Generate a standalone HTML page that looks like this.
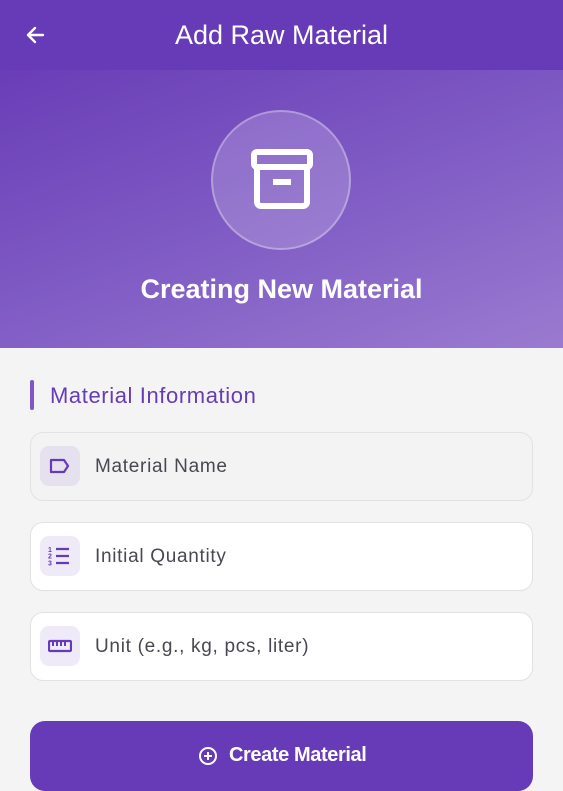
<!DOCTYPE html>
<html><head><meta charset="utf-8"><style>
*{box-sizing:border-box;margin:0;padding:0}
body{width:563px;height:770px;overflow:hidden;background:#f4f4f4;font-family:"Liberation Sans",sans-serif;position:relative}
.hdr{position:absolute;left:0;top:0;width:563px;height:70px;background:#673ab7}
.hdr .t{position:absolute;left:0;width:563px;top:20px;text-align:center;color:#fff;font-size:27px;letter-spacing:0px}
.hero{position:absolute;left:0;top:70px;width:563px;height:278px;background:linear-gradient(160deg,#6a3db7 0%,#7f5bc4 50%,#9a7bd0 100%)}
.circ{position:absolute;left:211px;top:40px;width:140px;height:140px;border-radius:50%;background:rgba(255,255,255,0.18);border:2px solid rgba(255,255,255,0.3)}
.ht{position:absolute;left:0;width:563px;top:204px;text-align:center;color:#fff;font-size:27px;font-weight:bold;letter-spacing:0px}
.sec{position:absolute;left:30px;top:380px;width:4px;height:30px;border-radius:2px;background:#7e57c2}
.st{position:absolute;left:50px;top:383px;color:#673ab7;font-size:22px;letter-spacing:0.6px}
.f{position:absolute;left:30px;width:503px;height:69px;border-radius:13px;border:1.5px solid #e2e2e2;background:#fff}
.f .ib{position:absolute;left:9px;top:13px;width:40px;height:40px;border-radius:9px;background:#efeaf7}
.f .ib svg{position:absolute;left:8px;top:8px}
.f .l{position:absolute;left:64px;top:23px;font-size:19px;color:#4a4750;letter-spacing:0.7px}
.btn{position:absolute;left:30px;top:721px;width:503px;height:70px;border-radius:15px;background:#673ab7;color:#fff;font-size:20px;font-weight:bold;letter-spacing:-0.4px}
</style></head><body>
<div class="hdr">
<svg style="position:absolute;left:23px;top:23px" width="24" height="24" viewBox="0 0 24 24"><path d="M20 12H5M12 5l-7 7 7 7" fill="none" stroke="#fff" stroke-width="2.4" stroke-linecap="round" stroke-linejoin="round"/></svg>
<div class="t">Add Raw Material</div></div>
<div class="hero">
<div class="circ"><svg style="position:absolute;left:36px;top:36px" width="66" height="66" viewBox="0 0 66 66"><rect x="5" y="4" width="56" height="15" rx="3" fill="none" stroke="#fff" stroke-width="6"/><path d="M8 19v35a4 4 0 0 0 4 4h42a4 4 0 0 0 4-4V19" fill="none" stroke="#fff" stroke-width="6"/><rect x="24" y="31" width="18" height="6" fill="#fff"/></svg></div>
<div class="ht">Creating New Material</div></div>
<div class="sec"></div><div class="st">Material Information</div>
<div class="f" style="top:432px;background:#f3f3f3"><div class="ib" style="background:#e6e1ef"><svg width="24" height="24" viewBox="0 0 24 24"><path d="M3 6h13l4 6-4 6H3z" fill="none" stroke="#673ab7" stroke-width="2.2" stroke-linejoin="round"/></svg></div><div class="l">Material Name</div></div>
<div class="f" style="top:522px"><div class="ib"><svg width="24" height="24" viewBox="0 0 24 24"><path d="M8 5h13M8 12h13M8 19h13" stroke="#673ab7" stroke-width="2.2"/><text x="0" y="8" font-size="7" font-weight="bold" fill="#673ab7" font-family="Liberation Sans">1</text><text x="0" y="14.5" font-size="7" font-weight="bold" fill="#673ab7" font-family="Liberation Sans">2</text><text x="0" y="21.5" font-size="7" font-weight="bold" fill="#673ab7" font-family="Liberation Sans">3</text></svg></div><div class="l">Initial Quantity</div></div>
<div class="f" style="top:612px"><div class="ib"><svg width="24" height="24" viewBox="0 0 24 24"><rect x="1" y="7" width="22" height="10" rx="1" fill="none" stroke="#673ab7" stroke-width="2.2"/><path d="M5 8v4M9 8v4M13 8v4M17 8v4" stroke="#673ab7" stroke-width="2"/></svg></div><div class="l">Unit (e.g., kg, pcs, liter)</div></div>
<div class="btn"><svg style="position:absolute;left:168px;top:25px" width="20" height="20" viewBox="0 0 20 20"><circle cx="10" cy="10" r="8" fill="none" stroke="#fff" stroke-width="2"/><path d="M10 6v8M6 10h8" stroke="#fff" stroke-width="2"/></svg><div style="position:absolute;left:199px;top:23px">Create Material</div></div>
</body></html>
